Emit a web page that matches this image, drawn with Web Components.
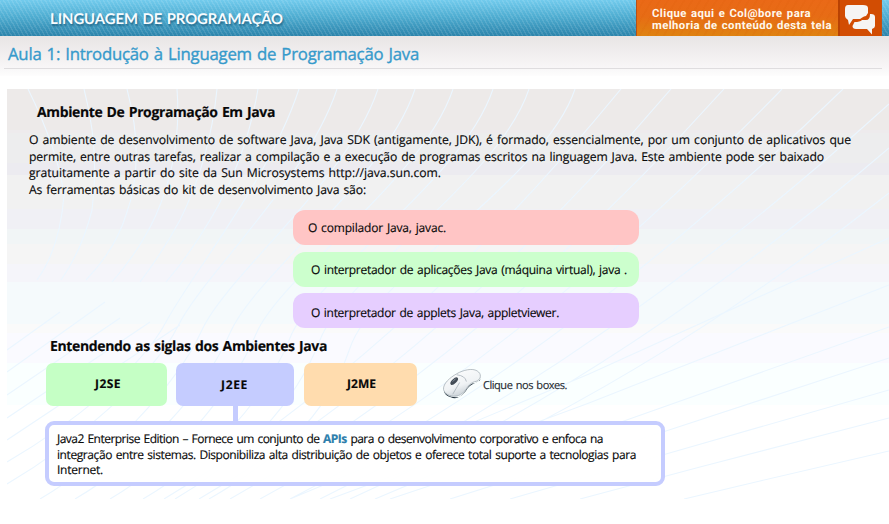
<!DOCTYPE html>
<html lang="pt-BR">
<head>
<meta charset="utf-8">
<title>Linguagem de Programação</title>
<style>
html,body{margin:0;height:524px;overflow:hidden;background:#fff}
body{font-family:"Trebuchet MS","Open Sans",sans-serif;color:#080808;text-rendering:geometricPrecision;word-spacing:1px}
</style>
</head>
<body>
<lesson-page></lesson-page>
<script>
const define=(name,html,setup)=>customElements.define(name,class extends HTMLElement{
  constructor(){super();const t=document.createElement('template');t.innerHTML=html;
    this.attachShadow({mode:'open'}).append(t.content.cloneNode(true));}
  connectedCallback(){if(setup)setup(this,this.shadowRoot);}
});

// One line of text, tracked so that it spans the width in "w".
define('fit-line',`<style>:host{display:block;white-space:nowrap}span{display:inline-block}</style><span><slot></slot></span>`,(el,root)=>{
  const s=root.querySelector('span'),w=+el.getAttribute('w');
  if(w)s.style.letterSpacing=(w-s.getBoundingClientRect().width)/el.textContent.length+'px';
});

define('chat-icon',`<style>:host{display:block;width:44px;height:36px;background:#d24d03;border-left:2px solid #b94203;border-right:1px solid #c65112;box-sizing:border-box}svg{display:block}</style>
<svg width="41" height="36" viewBox="0 0 41 36"><path d="M8 5H23Q28 5 28 8V13L26 16Q24 16 20 19H13L9 25L8 20Q5 18 5 16V9Q5 5 8 5Z" fill="#f6f5f4"/><path d="M31 14Q35 14 35 17V26Q35 28 32 29V34.5L27 29H16Q12.500 29 12.500 26L14.500 22Q20 22 22 20H26Q30 20 30 14Z" fill="#f6f5f4"/></svg>`);

define('collab-banner',`<style>:host{display:flex;width:246px;height:36px;color:#fff8ed}
.t{box-sizing:border-box;width:202px;padding:8px 0 0 15px;border-left:1px solid #b65119;background:repeating-linear-gradient(120deg,#fff0 0 5px,#d4530017 5px 7px),linear-gradient(#ea6917,#e76c15 45%,#df8210);font:700 11.3px/11.5px Roboto,sans-serif}
.t fit-line+fit-line{padding-top:.5px}</style>
<div class="t"><fit-line w="159">Clique aqui e Col@bore para</fit-line><fit-line w="180">melhoria de conteúdo desta tela</fit-line></div><chat-icon></chat-icon>`);

define('top-bar',`<style>:host{display:flex;justify-content:space-between;box-sizing:border-box;height:36px;padding:0 7px 0 50px;background:repeating-linear-gradient(60deg,#ffffff00 0 2.2px,#ffffff1c 2.2px 3.6px),linear-gradient(#72cbed,#50aed2 45%,#2c84ab)}
fit-line{padding-top:9px;font:700 14.8px/20px Lato,sans-serif;color:#f8fcff;text-shadow:1px 2px 2px #124e70b0}</style>
<fit-line w="233">LINGUAGEM DE PROGRAMAÇÃO</fit-line><collab-banner></collab-banner>`);

define('lesson-title',`<style>:host{display:block;box-sizing:border-box;height:40px;padding:6px 7px 0 4px;background:linear-gradient(#e8e5e5,#f7f5f6 75%,#fdfdfd);color:#369acb;font-size:16.800px;line-height:23px;-webkit-text-stroke:.35px #369acb}
div{box-sizing:border-box;height:27px;padding-left:4px;border-bottom:1px solid #dfdddf}</style>
<div><fit-line w="411">Aula 1: Introdução à Linguagem de Programação Java</fit-line></div>`);

// Faint arcs and rays drawn over banded background stripes.
define('ray-backdrop',`<style>:host{display:block;position:absolute;inset:0}svg{display:block}</style>
<svg width="882" height="410" viewBox="7 89 882 410" fill="none" stroke="#ebf6ff" stroke-width="1.1"></svg>`,(el,root)=>{
  let d='';
  for(const p of [[28,58,150,64,195],[84,100,150,92,210],[127,146,160,126,215],[177,182,155,156,215],[217,210,160,180,220],[258,246,160,210,220]])
    d+=`M${p[0]} 89Q${p[1]} ${p[2]} ${p[3]} ${p[4]}`;
  d+='M64 195Q60 248 37 280M92 210Q82 250 61 280M126 215Q115 250 86 280M156 215Q140 250 112 282M180 220Q164 250 140 282M210 220Q190 254 166 282';
  for(const p of [[299,166,322,7,462],[337,178,326,7,484],[378,202,330,40,499],[415,230,333,75,499],[453,256,334,110,499],[493,290,338,143,499],[529,320,340,175,499],[575,350,348,209,499]])
    d+=`M${p[0]} 89C${p[0]-30} 180 ${p[1]+25} 275 ${p[1]} ${p[2]}S${p[3]+65} ${p[4]-38} ${p[3]} ${p[4]}`;
  for(const p of [[621,89,244],[671,89,279],[724,89,310],[782,89,340],[843,89,370],[889,104,400],[889,148,430],[889,193,455]])
    d+=`M${p[0]} ${p[1]}Q${p[2]+(p[0]-p[2])*.42} ${p[1]+(499-p[1])*.65} ${p[2]-80} 499`;
  for(const p of [[889,238,589,374,290],[889,285,589,403,330],[889,327,621,422,390],[889,358,666,431,450],[889,390,666,454,510],[889,418,700,467,580],[889,451,760,481,684]])
    d+=`M${p[0]} ${p[1]}L${p[2]} ${p[3]}L${p[4]} 499`;
  for(const p of [[7,350,60,312],[7,372,105,302],[7,395,120,318],[7,418,150,322],[7,440,180,325]])
    d+=`M${p[0]} ${p[1]}L${p[2]} ${p[3]}`;
  const path=document.createElementNS('http://www.w3.org/2000/svg','path');
  path.setAttribute('d',d);root.querySelector('svg').append(path);
});

define('tool-item',`<style>:host{display:block;box-sizing:border-box;width:346px;height:35px;border-radius:12px;font-size:12px;line-height:18px}</style><slot></slot>`);

define('edition-box',`<style>:host{display:block;box-sizing:border-box;height:43px;border-radius:7px;font-weight:700;font-size:12px;line-height:18px;padding-top:12px}</style><slot></slot>`);

define('mouse-hint',`<style>:host{display:flex;color:#252b31;font-size:11px;line-height:16px}svg{display:block;flex:none;margin-top:3px}fit-line{padding-top:15px}</style>
<svg width="40" height="36" viewBox="0 0 41 37"><defs><linearGradient id="m" x1="0" y1="0" x2=".5" y2="1"><stop stop-color="#fff"/><stop offset=".65" stop-color="#f0f3f5"/><stop offset="1" stop-color="#c5cdd3"/></linearGradient></defs>
<path d="M2 25C3 30 10 33 17 32C23 30 25 21 31 18C36 17 40 15 40 11L39 15C31 19 28 20 25 25C20 32 14 35 9 32C5 31 2 29 2 25Z" fill="#263541"/>
<path d="M1.500 24C1 18 8 12 15 8C22 4 31 2 36 5C41 8 40 13 36 15.500C28 17 27 21 23 26C18 32 11 32 6 29.500C3 28 2 26 1.500 24Z" fill="url(#m)" stroke="#9ba5ad" stroke-width=".7"/>
<path d="M15 9Q24 10 25 16M18 17Q14 24 11 29" fill="none" stroke="#a5afb7" stroke-width=".8"/><ellipse cx="12.500" cy="15.500" rx="2.300" ry="5" transform="rotate(45 12.500 15.500)" fill="#434c56"/><path d="M11 16L14 13" stroke="#8993a0"/></svg>
<fit-line w="84">Clique nos boxes.</fit-line>`);

define('detail-box',`<style>:host{display:block;width:620px;height:80px}
i{display:block;position:relative;width:5px;height:17px;margin:-16px 0 -1px 188px;background:#c5ccff}
div{box-sizing:border-box;height:65px;width:620px;border:4px solid #c5ccff;border-radius:9px;background:#fffffff0;padding:6px 0 0 8px;font-size:12px;line-height:15.5px}
b{color:#2c7eac}</style><i></i>
<div><fit-line w="546">Java2 Enterprise Edition – Fornece um conjunto de <b>APIs</b> para o desenvolvimento corporativo e enfoca na</fit-line><fit-line w="579">integração entre sistemas. Disponibiliza alta distribuição de objetos e oferece total suporte a tecnologias para</fit-line><fit-line w="46">Internet.</fit-line></div>`);

define('lesson-content',`<style>
:host{display:block;position:relative;box-sizing:border-box;margin:13px 0 0 7px;height:410px;
background:linear-gradient(#edeae9 0 41px,#eeebed 41px 44px,#ededee 44px 74px,#ecebf0 74px 86px,#f1f1f1 86px 120px,#f0f0f5 120px 140px,#f1f5f6 140px 155px,#f5f5f5 155px 175px,#f5f5fa 175px 193px,#f5fafc 193px 235px,#fafafa 235px 244px,#fafaff 244px 274px,#faffff 274px 316px,#fff 316px)}
main{position:relative;height:410px;display:flex;flex-direction:column;align-items:flex-start;-webkit-text-stroke:.15px}
h2{margin:0;font-size:14px;line-height:20px;font-weight:700}
.a{margin:14px 0 0 30px}.p{margin:9px 0 0 22px;font-size:12.200px;line-height:16.500px}
.tools{margin:12px 0 0 286px;display:grid;gap:6.500px}
.b{margin:9px 0 0 43px}.row{display:flex;margin:6px 0 0 39px;height:43px}
mouse-hint{margin:0 0 0 25px}mouse-hint{gap:1px}detail-box{margin:15px 0 0 38px}
</style><ray-backdrop></ray-backdrop><main>
<h2 class="a"><fit-line w="238">Ambiente De Programação Em Java</fit-line></h2>
<div class="p"><fit-line w="822">O ambiente de desenvolvimento de software Java, Java SDK (antigamente, JDK), é formado, essencialmente, por um conjunto de aplicativos que</fit-line><fit-line w="795">permite, entre outras tarefas, realizar a compilação e a execução de programas escritos na linguagem Java. Este ambiente pode ser baixado</fit-line><fit-line w="412">gratuitamente a partir do site da Sun Microsystems http://java.sun.com.</fit-line><fit-line w="337">As ferramentas básicas do kit de desenvolvimento Java são:</fit-line></div>
<div class="tools">
<tool-item style="background:#ffc5c5;padding:9px 0 0 15px"><fit-line w="138">O compilador Java, javac.</fit-line></tool-item>
<tool-item style="background:#ccffcd;padding:9px 0 0 18px"><fit-line w="316">O interpretador de aplicações Java (máquina virtual), java .</fit-line></tool-item>
<tool-item style="background:#e6ceff;padding:11px 0 0 18px"><fit-line w="248">O interpretador de applets Java, appletviewer.</fit-line></tool-item></div>
<h2 class="b"><fit-line w="277">Entendendo as siglas dos Ambientes Java</fit-line></h2>
<div class="row">
<edition-box style="width:121px;background:#c5ffc5;padding-left:49px"><fit-line w="26">J2SE</fit-line></edition-box>
<edition-box style="width:118px;background:#c5ccff;margin-left:9px;padding-left:45px;padding-top:13px"><fit-line w="27">J2EE</fit-line></edition-box>
<edition-box style="width:113px;background:#ffdcae;margin-left:10px;padding-left:43px"><fit-line w="29">J2ME</fit-line></edition-box>
<mouse-hint></mouse-hint></div>
<detail-box></detail-box>
</main>`);

define('lesson-page',`<style>:host{display:block;width:889px;height:524px;overflow:hidden}</style><top-bar></top-bar><lesson-title></lesson-title><lesson-content></lesson-content>`);
</script>
</body>
</html>
